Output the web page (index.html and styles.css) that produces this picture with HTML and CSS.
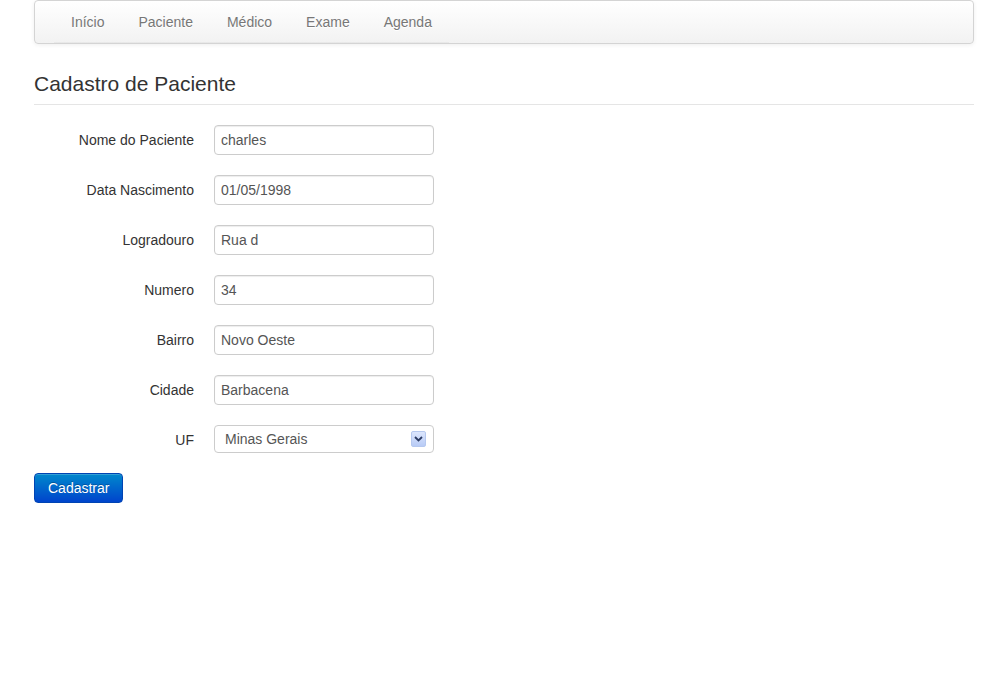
FILE: index.html
```html
<!DOCTYPE html>
<html lang="pt">
<head>
<meta charset="utf-8">
<title>Cadastro de Paciente</title>
<link rel="stylesheet" href="styles.css">
</head>
<body>
<div class="container">
  <nav class="navbar">
    <ul class="nav">
      <li><a href="#">Início</a></li>
      <li><a href="#">Paciente</a></li>
      <li><a href="#">Médico</a></li>
      <li><a href="#">Exame</a></li>
      <li><a href="#">Agenda</a></li>
    </ul>
  </nav>
  <form class="form-horizontal">
    <h1 class="legend">Cadastro de Paciente</h1>
    <div class="control-group">
      <label class="control-label">Nome do Paciente</label>
      <input class="field" type="text" value="charles">
    </div>
    <div class="control-group">
      <label class="control-label">Data Nascimento</label>
      <input class="field" type="text" value="01/05/1998">
    </div>
    <div class="control-group">
      <label class="control-label">Logradouro</label>
      <input class="field" type="text" value="Rua d">
    </div>
    <div class="control-group">
      <label class="control-label">Numero</label>
      <input class="field" type="text" value="34">
    </div>
    <div class="control-group">
      <label class="control-label">Bairro</label>
      <input class="field" type="text" value="Novo Oeste">
    </div>
    <div class="control-group">
      <label class="control-label">Cidade</label>
      <input class="field" type="text" value="Barbacena">
    </div>
    <div class="control-group">
      <label class="control-label">UF</label>
      <div class="select-wrap">
        <select class="select">
          <option>Minas Gerais</option>
        </select>
        <span class="select-arrow">
          <svg width="9" height="6" viewBox="0 0 9 6"><path d="M1 1 L4.5 4.5 L8 1" fill="none" stroke="#2b3b63" stroke-width="1.8"/></svg>
        </span>
      </div>
    </div>
    <button type="button" class="btn">Cadastrar</button>
  </form>
</div>
</body>
</html>
```
FILE: styles.css
```css
html, body {
  margin: 0;
  padding: 0;
  background: #fff;
  font-family: "Liberation Sans", Arial, sans-serif;
  font-size: 14px;
  line-height: 20px;
  color: #333;
}
.container {
  width: 940px;
  margin: 0 0 0 34px;
}
.navbar {
  height: 42px;
  border: 1px solid #d4d4d4;
  border-radius: 4px;
  background: linear-gradient(#ffffff, #f2f2f2);
  box-shadow: 0 1px 4px rgba(0,0,0,0.065);
  padding: 0 20px 0 19px;
  margin-bottom: 20px;
}
.nav {
  display: flex;
  list-style: none;
  margin: 0;
  padding: 0;
  height: 42px;
  width: 395px;
  box-shadow: inset 0 -1px 0 rgba(0,0,0,0.04);
}
.nav a {
  display: block;
  padding: 11px 17px;
  color: #777;
  text-decoration: none;
  text-shadow: 0 1px 0 #fff;
}
.legend {
  margin: 0 0 20px;
  font-size: 21px;
  font-weight: normal;
  line-height: 40px;
  color: #333;
  border-bottom: 1px solid #e5e5e5;
}
.control-group {
  display: flex;
  align-items: flex-start;
  margin-bottom: 20px;
}
.control-label {
  width: 160px;
  padding-top: 5px;
  text-align: right;
  margin-right: 20px;
}
.field {
  box-sizing: border-box;
  width: 220px;
  height: 30px;
  padding: 4px 6px;
  margin: 0;
  border: 1px solid #ccc;
  border-radius: 4px;
  font-family: inherit;
  font-size: 14px;
  line-height: 20px;
  color: #555;
  background: #fff;
  box-shadow: inset 0 1px 1px rgba(0,0,0,0.075);
  outline: none;
}
.select-wrap {
  position: relative;
  width: 220px;
  height: 28px;
}
.select {
  box-sizing: border-box;
  width: 220px;
  height: 28px;
  margin: 0;
  padding: 0 10px;
  border: 1px solid #ccc;
  border-radius: 4px;
  background: #fff;
  font-family: inherit;
  font-size: 14px;
  color: #555;
  appearance: none;
  -webkit-appearance: none;
  outline: none;
}
.select-arrow {
  position: absolute;
  left: 197px;
  top: 6px;
  box-sizing: border-box;
  width: 15px;
  height: 16px;
  border: 1px solid #b5c8ef;
  border-radius: 2px;
  background: linear-gradient(#dce6fd, #b8cbf6);
  display: flex;
  align-items: center;
  justify-content: center;
  pointer-events: none;
}
.btn {
  box-sizing: border-box;
  height: 30px;
  padding: 4px 13px;
  border: 1px solid #0044b3;
  border-radius: 4px;
  background: linear-gradient(#0088cc, #0044cc);
  color: #fff;
  font-family: inherit;
  font-size: 14px;
  line-height: 20px;
  text-shadow: 0 -1px 0 rgba(0,0,0,0.25);
  box-shadow: inset 0 1px 0 rgba(255,255,255,0.2);
  cursor: pointer;
}
```
